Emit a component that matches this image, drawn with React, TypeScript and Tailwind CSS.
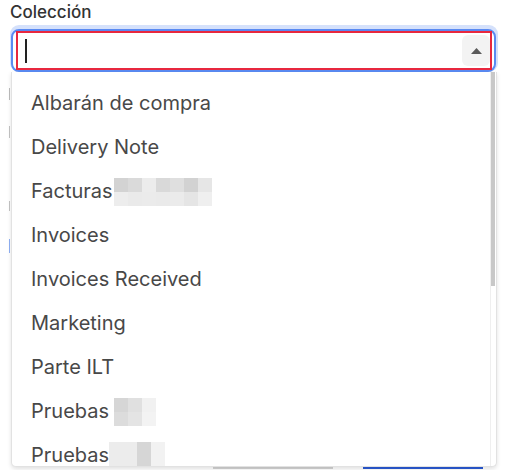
import React from 'react';

// pixelated redaction blocks, written out as full class names
const Blur = ({ rows }: { rows: string[][] }) => (
  <span className="inline-flex flex-col align-middle">
    {rows.map((r, i) => (
      <span key={i} className="flex">
        {r.map((c, j) => (
          <span key={j} className={`block w-[14px] h-[14px] ${c}`} />
        ))}
      </span>
    ))}
  </span>
);

const items: { label: string; blur?: string[][]; ml?: string }[] = [
  { label: 'Albarán de compra' },
  { label: 'Delivery Note' },
  {
    label: 'Facturas',
    ml: 'ml-[1px]',
    blur: [
      ['bg-[#d3d3d3]', 'bg-[#dadada]', 'bg-[#ececec]', 'bg-[#d9d9d9]', 'bg-[#dfdfdf]', 'bg-[#d2d2d2]', 'bg-[#e6e6e6]'],
      ['bg-[#ededed]', 'bg-[#eaeaea]', 'bg-[#ebebeb]', 'bg-[#eaeaea]', 'bg-[#ebebeb]', 'bg-[#e5e5e5]', 'bg-[#efefef]'],
    ],
  },
  { label: 'Invoices' },
  { label: 'Invoices Received' },
  { label: 'Marketing' },
  { label: 'Parte ILT' },
  {
    label: 'Pruebas .',
    ml: 'ml-[-6px]',
    blur: [
      ['bg-[#d6d6d6]', 'bg-[#e0e0e0]', 'bg-[#f1f1f1]'],
      ['bg-[#dcdcdc]', 'bg-[#e4e4e4]', 'bg-[#f3f3f3]'],
    ],
  },
  {
    label: 'Pruebas',
    ml: 'ml-[0px]',
    blur: [
      ['bg-[#ececec]', 'bg-[#ececec]', 'bg-[#d6d6d6]', 'bg-[#f2f2f2]'],
      ['bg-[#ececec]', 'bg-[#ececec]', 'bg-[#d6d6d6]', 'bg-[#f2f2f2]'],
    ],
  },
];

export default function App() {
  return (
    <div className="relative w-[506px] h-[470px] bg-white overflow-hidden font-['Inter','Noto_Sans',sans-serif]">
      {/* page beneath the dropdown */}
      <div className="pl-[10px] pr-[8px] pt-[1px]">
        <div className="text-[17px] leading-[22px] font-medium text-[#333]">Colección</div>

        <div className="mt-[2px] rounded-[9px] bg-[#d5e1fb] pt-[4px] pl-[1px] pr-[2px] h-[47px]">
          <div className="h-[43px] rounded-[8px] border-2 border-[#5a8af2] bg-white pl-[3px] pr-[2px] pb-[1px]">
            <div className="h-[39px] border-2 border-[#e8283f] flex items-center pl-[7px]">
              <span className="block w-[1.5px] h-[24px] bg-[#222]" />
              <div className="ml-auto w-[28px] h-[31px] rounded-[6px] bg-[#f3f3f3] flex items-center justify-center">
                <svg width="11" height="6" viewBox="0 0 11 6">
                  <path d="M0 6 L5.5 0 L11 6 Z" fill="#5a5a5a" />
                </svg>
              </div>
            </div>
          </div>
        </div>

        {/* underlying fields peeking out at the left edge */}
        <div className="flex flex-col ml-[-1px] mt-[16px] gap-[26px]">
          <span className="block w-[1px] h-[12px] bg-[#bdbdbd]" />
          <span className="block w-[1px] h-[12px] bg-[#c4c4c4]" />
          <span className="block w-[1px] h-[10px] mt-[37px] bg-[#c4c4c4]" />
          <span className="block w-[1px] h-[14px] mt-[2px] bg-[#8fb0f5]" />
        </div>

        <div className="flex mt-[210px] pl-[203px] gap-[30px]">
          <span className="block w-[120px] h-[6px] bg-[#d4d4d4]" />
          <span className="block w-[120px] h-[6px] bg-[#2a5bd6]" />
        </div>
      </div>

      {/* dropdown menu */}
      <div className="absolute left-[11px] top-[72px] w-[486px] h-[395px] bg-white border border-[#e2e2e2] border-t-0 rounded-b-[5px] shadow-[0_2px_4px_rgba(0,0,0,0.12)] overflow-hidden flex">
        <div className="flex-1 pt-[9px]">
          {items.map((it) => (
            <div key={it.label} className="h-[44px] flex items-center pl-[19px] text-[20px] text-[#484848]">
              <span>{it.label}</span>
              {it.blur && (
                <span className={it.ml}>
                  <Blur rows={it.blur} />
                </span>
              )}
            </div>
          ))}
        </div>
        <div className="w-[5px] mr-[1px] border-l border-[#efefef]">
          <div className="h-[214px] bg-[#c8c8c8]" />
        </div>
      </div>
    </div>
  );
}
